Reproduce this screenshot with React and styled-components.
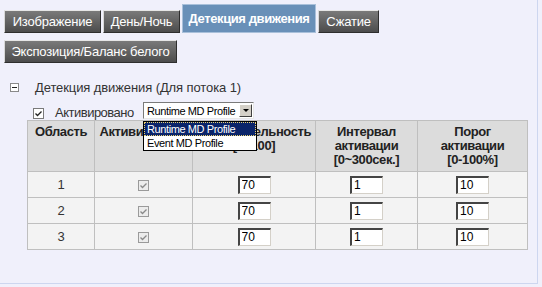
import React from "react";
import styled, { createGlobalStyle, css } from "styled-components";

const GlobalStyle = createGlobalStyle`
  html, body { margin: 0; padding: 0; background: #f0f0fb; }
  body { font-family: "Liberation Sans", Arial, sans-serif; font-size: 13px; color: #333; }
  * { box-sizing: border-box; }
`;

const Page = styled.div`
  width: 538px;
  height: 284px;
  padding: 4px 0 0 4px;
  border-right: 1px solid #cdd6ef;
  border-bottom: 1px solid #cdd6ef;
  background: #f0f0fb;
`;

const TabRow = styled.div`
  display: flex;
  align-items: flex-end;
  gap: 2px;
  margin-top: ${(p) => p.$gap || 0}px;
`;

const Tab = styled.div`
  width: ${(p) => p.$w}px;
  height: 23px;
  display: flex;
  align-items: center;
  justify-content: center;
  font-size: 13px;
  letter-spacing: -0.2px;
  color: #fff;
  white-space: nowrap;
  background: linear-gradient(#7a7a7a, #4c4c4c);
  border: 1px solid;
  border-color: #e6e6e6 #2e2e2e #2e2e2e #d8d8d8;
  ${(p) =>
    p.$active &&
    css`
      height: 29px;
      align-items: flex-start;
      padding-top: 6px;
      font-weight: bold;
      letter-spacing: -0.4px;
      background: #6990b8;
      border: 1px solid #a9c0da;
    `}
`;

const SectionHeader = styled.div`
  display: flex;
  align-items: center;
  height: 15px;
  margin: 17px 0 0 6px;
  gap: 16px;
  color: #333;
  letter-spacing: -0.1px;
`;

const Collapse = styled.span`
  width: 9px;
  height: 9px;
  border: 1px solid #8a8a8a;
  background: #fff;
  position: relative;
  display: inline-block;
  &::after {
    content: "";
    position: absolute;
    left: 1px;
    top: 3px;
    width: 5px;
    height: 1px;
    background: #222;
  }
`;

const ControlRow = styled.div`
  display: flex;
  align-items: center;
  height: 17px;
  margin: 7px 0 0 29px;
`;

const Check = styled.span`
  width: 11px;
  height: 11px;
  display: inline-flex;
  align-items: center;
  justify-content: center;
  border: 1px solid ${(p) => (p.$disabled ? "#9a9a9a" : "#7a7a7a")};
  background: ${(p) => (p.$disabled ? "#ececec" : "#fff")};
  margin-top: ${(p) => p.$offset || 0}px;
  vertical-align: middle;
  svg { display: block; }
`;

const Label = styled.span`
  width: 99px;
  margin-top: 4px;
  padding-left: 11px;
  color: #333;
  letter-spacing: -0.5px;
  white-space: nowrap;
`;

const SelectWrap = styled.div`
  position: relative;
  width: 111px;
  height: 17px;
`;

const SelectBox = styled.div`
  width: 100%;
  height: 100%;
  display: flex;
  align-items: center;
  background: #fff;
  border: 1px solid;
  border-color: #7a7a7a #e8e8e8 #e8e8e8 #7a7a7a;
  font-size: 11px;
  letter-spacing: -0.4px;
  color: #000;
  padding-left: 3px;
`;

const SelectText = styled.span`
  flex: 1;
  white-space: nowrap;
`;

const Arrow = styled.span`
  width: 13px;
  height: 13px;
  margin-right: 1px;
  background: #d4d0c8;
  border: 1px solid;
  border-color: #fff #404040 #404040 #fff;
  display: flex;
  align-items: center;
  justify-content: center;
  &::after {
    content: "";
    border-left: 3px solid transparent;
    border-right: 3px solid transparent;
    border-top: 3px solid #000;
  }
`;

const Popup = styled.div`
  position: absolute;
  left: 0;
  top: calc(100% + 2px);
  width: 114px;
  background: #fff;
  border: 1px solid #000;
  z-index: 5;
`;

const Option = styled.div`
  height: 14px;
  line-height: 12px;
  padding-left: 2px;
  font-size: 11px;
  letter-spacing: -0.4px;
  white-space: nowrap;
  color: ${(p) => (p.$selected ? "#fff" : "#000")};
  background: ${(p) => (p.$selected ? "#0a246a" : "#fff")};
  border: 1px ${(p) => (p.$selected ? "dotted #e8d070" : "solid transparent")};
`;

const Table = styled.table`
  margin: 1px 0 0 23px;
  width: 500px;
  table-layout: fixed;
  border-collapse: collapse;
  font-size: 13px;
  color: #333;
`;

const Th = styled.th`
  background: #dcdcdc;
  border: 1px solid #bfbfbf;
  font-weight: bold;
  letter-spacing: -0.4px;
  color: #222;
  vertical-align: top;
  text-align: center;
  line-height: 14px;
  padding: 4px 0 0;
  height: 51px;
  width: ${(p) => p.$w}px;
`;

const Td = styled.td`
  background: #f3f3f3;
  border: 1px solid #bfbfbf;
  text-align: center;
  vertical-align: middle;
  height: 26px;
  padding: 0;
`;

const Input = styled.input`
  width: 33px;
  height: 18px;
  padding: 0 2px;
  font-family: "Liberation Sans", Arial, sans-serif;
  font-size: 12px;
  color: #000;
  background: #fff;
  border: 1px solid;
  border-top: 2px solid #444;
  border-left: 2px solid #444;
  border-right-color: #d4d0c8;
  border-bottom-color: #d4d0c8;
  outline: none;
  vertical-align: middle;
`;

const CheckMark = ({ color }) => (
  <svg width="7" height="6" viewBox="0 0 7 6">
    <path d="M0.5 2.5 L2.5 4.5 L6.5 0.5" fill="none" stroke={color} strokeWidth="1.3" />
  </svg>
);

const rows = [1, 2, 3];

export default function App() {
  return (
    <>
      <GlobalStyle />
      <Page>
        <TabRow>
          <Tab $w={97}>Изображение</Tab>
          <Tab $w={77}>День/Ночь</Tab>
          <Tab $w={134} $active>Детекция движения</Tab>
          <Tab $w={61}>Сжатие</Tab>
        </TabRow>
        <TabRow $gap={7}>
          <Tab $w={173}>Экспозиция/Баланс белого</Tab>
        </TabRow>

        <SectionHeader>
          <Collapse />
          <span>Детекция движения (Для потока 1)</span>
        </SectionHeader>

        <ControlRow>
          <Check $offset={6}>
            <CheckMark color="#222" />
          </Check>
          <Label>Активировано</Label>
          <SelectWrap>
            <SelectBox>
              <SelectText>Runtime MD Profile</SelectText>
              <Arrow />
            </SelectBox>
            <Popup>
              <Option $selected>Runtime MD Profile</Option>
              <Option>Event MD Profile</Option>
            </Popup>
          </SelectWrap>
        </ControlRow>

        <Table>
          <thead>
            <tr>
              <Th $w={67}>Область</Th>
              <Th $w={98}>Активировано</Th>
              <Th $w={123}>
                Чувствительность
                <br />
                [0~100]
              </Th>
              <Th $w={102}>
                Интервал
                <br />
                активации
                <br />
                [0~300сек.]
              </Th>
              <Th $w={110}>
                Порог
                <br />
                активации
                <br />
                [0-100%]
              </Th>
            </tr>
          </thead>
          <tbody>
            {rows.map((n) => (
              <tr key={n}>
                <Td>{n}</Td>
                <Td>
                  <Check $disabled>
                    <CheckMark color="#8a8a8a" />
                  </Check>
                </Td>
                <Td>
                  <Input defaultValue="70" />
                </Td>
                <Td>
                  <Input defaultValue="1" />
                </Td>
                <Td>
                  <Input defaultValue="10" />
                </Td>
              </tr>
            ))}
          </tbody>
        </Table>
      </Page>
    </>
  );
}
